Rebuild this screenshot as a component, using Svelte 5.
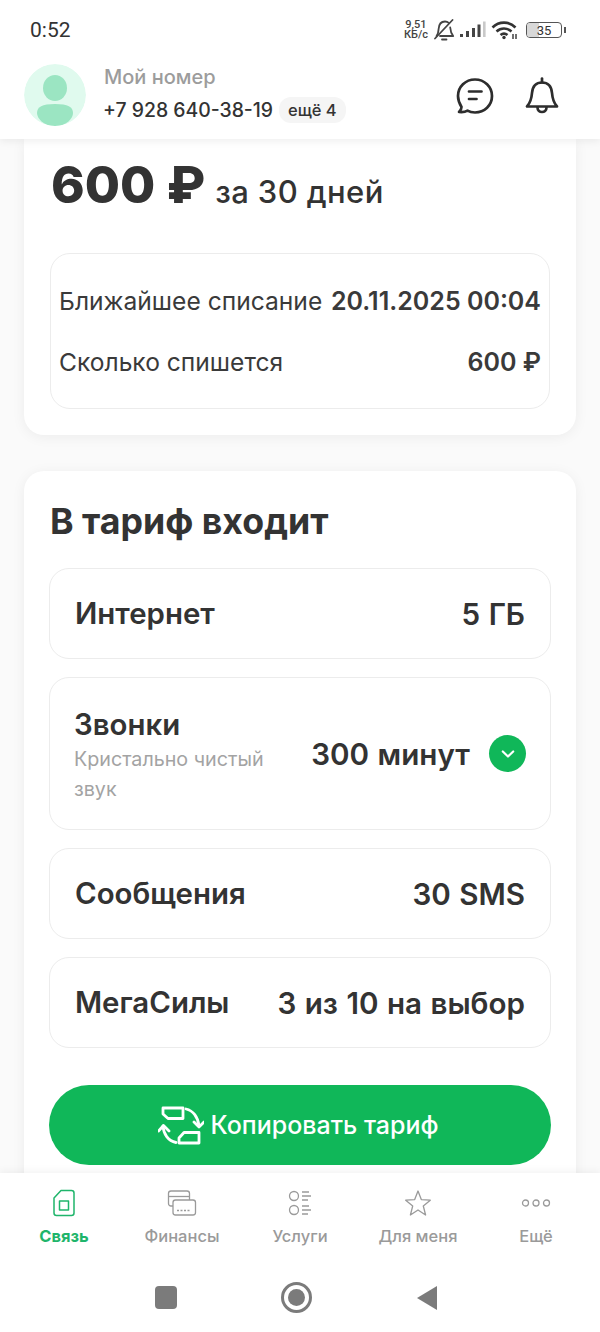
<script>
  const tabs = [
    { label: "Связь", active: true },
    { label: "Финансы" },
    { label: "Услуги" },
    { label: "Для меня" },
    { label: "Ещё" }
  ];
</script>

<div class="screen">
  <header class="top">
    <div class="status">
      <span class="time">0:52</span>
      <div class="status-icons">
        <span class="speed">9,51<br />КБ/с</span>
        <svg width="22" height="22" viewBox="0 0 22 22" fill="none" stroke="#444" stroke-width="1.8" stroke-linejoin="round" stroke-linecap="round">
          <path d="M3.500 17c1.600-1.800 1.900-4 2.100-7C5.900 5.500 8 2.500 12 2.500c1.500 0 2.800.5 3.800 1.400" />
          <path d="M17.200 8.500c.2 3 .7 5.700 3 8.500H7" />
          <path d="M9 20.500h4.500" />
          <path d="M2 19.500 19.500 1" />
        </svg>
        <svg class="signal" width="26" height="18" viewBox="0 0 26 18" fill="#444">
          <rect x="0" y="13" width="3" height="3" />
          <rect x="6" y="10" width="3" height="6" />
          <rect x="12" y="7" width="3" height="9" />
          <rect x="17.500" y="3.500" width="3" height="12.500" />
          <rect x="23" y="0.500" width="2.600" height="15.500" fill="#c9c9c9" />
        </svg>
        <svg width="28" height="20" viewBox="0 0 28 20" fill="none" stroke="#333" stroke-width="2.600">
          <path d="M1.500 7.500C8 1 18 1 24.500 7.500" />
          <path d="M5.500 11.500c4.500-4 10.500-4 15 0" />
          <path d="M9.500 15c2.200-1.800 4.800-1.800 7 0" />
          <circle cx="13" cy="17.500" r="1.700" fill="#333" stroke="none" />
          <path d="M22 19v-5M25 19v-5" stroke-width="1.400" />
        </svg>
        <div class="battery">
          <div class="battery-fill"></div>
          <span>35</span>
        </div>
        <div class="battery-tip"></div>
      </div>
    </div>
    <div class="account">
      <div class="avatar">
        <svg width="62" height="62" viewBox="0 0 62 62">
          <circle cx="31" cy="31" r="31" fill="#e0faee" />
          <ellipse cx="31" cy="24" rx="12" ry="13" fill="#9be5c2" />
          <path d="M13 49c0-6 5-9 18-9s18 3 18 9c0 5-6 13-18 13S13 54 13 49z" fill="#9be5c2" />
        </svg>
      </div>
      <div class="account-text">
        <div class="my-number">Мой номер</div>
        <div class="phone-row">
          <span class="phone">+7 928 640-38-19</span>
          <span class="more">ещё 4</span>
        </div>
      </div>
      <div class="actions">
        <svg width="40" height="40" viewBox="0 0 40 40" fill="none" stroke="#2d2d2d" stroke-width="2.700" stroke-linecap="round" stroke-linejoin="round">
          <path d="M20 3.500c9.500 0 17 7.200 17 16.500s-7.500 16.500-17 16.500c-3 0-5.500-.6-7.500-1.800-2.200 1.300-5 1.700-8.500 1.300 1.600-1.500 2.500-3.200 2.500-5C4.700 28 3 24.300 3 20 3 10.700 10.500 3.500 20 3.500z" />
          <path d="M14 15.500h12.500M14 23h7.500" />
        </svg>
        <svg width="36" height="40" viewBox="0 0 36 40" fill="none" stroke="#2d2d2d" stroke-width="2.700" stroke-linecap="round" stroke-linejoin="round">
          <path d="M18 6.500c-6.500 0-9.500 4.800-10 10.500-.4 5-1.400 9.500-5 13.500h30c-3.600-4-4.600-8.500-5-13.500-.5-5.700-3.500-10.500-10-10.500z" />
          <path d="M18 2.500v4" />
          <path d="M13.500 31.500c0 6 9 6 9 0" />
        </svg>
      </div>
    </div>
  </header>

  <main class="content">
    <section class="card price-card">
      <div class="price">
        <span class="amount">600 ₽</span>
        <span class="period">за 30 дней</span>
      </div>
      <div class="charge">
        <div class="charge-row">
          <span>Ближайшее списание</span>
          <b>20.11.2025 00:04</b>
        </div>
        <div class="charge-row">
          <span>Сколько спишется</span>
          <b>600 ₽</b>
        </div>
      </div>
    </section>

    <section class="card tariff-card">
      <h2>В тариф входит</h2>
      <div class="row">
        <span class="name">Интернет</span>
        <span class="value">5 ГБ</span>
      </div>
      <div class="row tall">
        <div class="name-col">
          <span class="name">Звонки</span>
          <span class="note">Кристально чистый звук</span>
        </div>
        <div class="value-wrap">
          <span class="value">300 минут</span>
          <span class="chevron">
            <svg width="14" height="10" viewBox="0 0 14 10" fill="none" stroke="#fff" stroke-width="2.200" stroke-linecap="round" stroke-linejoin="round">
              <path d="M1.800 2.500 7 7.500l5.200-5" />
            </svg>
          </span>
        </div>
      </div>
      <div class="row">
        <span class="name">Сообщения</span>
        <span class="value">30 SMS</span>
      </div>
      <div class="row">
        <span class="name">МегаСилы</span>
        <span class="value">3 из 10 на выбор</span>
      </div>
      <button class="copy">
        <svg width="46" height="40" viewBox="0 0 46 40" fill="none" stroke="#fff" stroke-width="2.800" stroke-linecap="round" stroke-linejoin="round">
          <path d="M5 3h20v10.500H10L5 9z" />
          <path d="M28 4c7 1.500 12 8 13 17" />
          <path d="M36 17l5 5 5-5" />
          <path d="M18 37.500C10 36 5.500 29 5 21" />
          <path d="M0.500 26 5.500 20.500 11 26" />
          <path d="M26 27.500h15v10.500H21v-5z" />
        </svg>
        <span>Копировать тариф</span>
      </button>
    </section>
  </main>

  <nav class="tabs">
    {#each tabs as tab, i}
      <div class="tab" class:active={tab.active}>
        <div class="tab-icon">
          {#if i === 0}
            <svg width="24" height="28" viewBox="0 0 24 28" fill="none" stroke="#1fb56b" stroke-width="1.500" stroke-linejoin="round">
              <path d="M9 1.500h10.500a2.500 2.500 0 0 1 2.500 2.500v20a2.500 2.500 0 0 1-2.500 2.500h-15A2.500 2.500 0 0 1 2 24V9z" />
              <rect x="7.500" y="12" width="9" height="9" />
            </svg>
          {:else if i === 1}
            <svg width="30" height="28" viewBox="0 0 30 28" fill="none" stroke="#9a9a9a" stroke-width="1.300" stroke-linejoin="round">
              <path d="M22 17H4a2.500 2.500 0 0 1-2.500-2.500v-10A2.500 2.500 0 0 1 4 2h16a2.500 2.500 0 0 1 2.500 2.500V11" />
              <path d="M1.500 7.500h21" />
              <rect x="6" y="11" width="22.500" height="15" rx="2.500" fill="#fff" />
              <path d="M10 21.500h14" stroke-dasharray="2 1.500" />
            </svg>
          {:else if i === 2}
            <svg width="24" height="28" viewBox="0 0 24 28" fill="none" stroke="#9a9a9a" stroke-width="1.300">
              <circle cx="6" cy="7" r="4.500" />
              <circle cx="6" cy="21" r="4.500" />
              <path d="M14 3h7M14 7h9M14 11h6M14 17h7M14 21h9M14 25h6" />
            </svg>
          {:else if i === 3}
            <svg width="26" height="28" viewBox="0 0 26 28" fill="none" stroke="#9a9a9a" stroke-width="1.300" stroke-linejoin="round">
              <path d="M13 2l3.300 8.600 9 .6-7 5.800 2.300 9L13 21l-7.600 5 2.300-9-7-5.800 9-.6z" />
            </svg>
          {:else}
            <svg width="30" height="10" viewBox="0 0 30 10" fill="none" stroke="#9a9a9a" stroke-width="1.300">
              <circle cx="4.500" cy="5" r="3" />
              <circle cx="15" cy="5" r="3" />
              <circle cx="25.500" cy="5" r="3" />
            </svg>
          {/if}
        </div>
        <span>{tab.label}</span>
      </div>
    {/each}
  </nav>

  <div class="system-nav">
    <div class="sys-square"></div>
    <div class="sys-circle"><div></div></div>
    <svg width="22" height="26" viewBox="0 0 22 26"><path d="M21 1v24L1 13z" fill="#7b7b7b" /></svg>
  </div>
</div>

<style>
  :global(body) {
    background: #fff;
  }
  .screen {
    width: 600px;
    height: 1332px;
    display: flex;
    flex-direction: column;
    overflow: hidden;
    font-family: Inter, "Noto Sans", sans-serif;
    color: #333;
    background: #fafafa;
  }
  .top {
    background: #fff;
    height: 139px;
    flex: none;
    box-shadow: 0 2px 8px rgba(0, 0, 0, 0.07);
    position: relative;
    z-index: 2;
  }
  .status {
    height: 60px;
    padding: 0 34px 0 30px;
    display: flex;
    align-items: center;
    justify-content: space-between;
  }
  .time {
    font-family: Roboto, sans-serif;
    font-size: 21px;
    color: #333;
  }
  .status-icons {
    display: flex;
    align-items: center;
    gap: 5px;
  }
  .speed {
    font-family: Roboto, sans-serif;
    font-size: 11px;
    line-height: 10.500px;
    font-weight: 500;
    color: #444;
    text-align: center;
  }
  .battery {
    position: relative;
    width: 36px;
    height: 16px;
    box-sizing: border-box;
    border: 1.500px solid #555;
    border-radius: 4px;
    margin-left: 2px;
    overflow: hidden;
    display: flex;
    align-items: center;
    justify-content: center;
    font-family: Roboto, sans-serif;
    font-size: 13px;
    color: #333;
  }
  .battery span {
    position: relative;
  }
  .battery-fill {
    position: absolute;
    left: 0;
    top: 0;
    bottom: 0;
    width: 35%;
    background: #d8d8d8;
  }
  .battery-tip {
    width: 2px;
    height: 6px;
    background: #555;
    margin-left: -3px;
  }
  .account {
    display: flex;
    align-items: center;
    padding: 0 40px 0 24px;
    margin-top: 4px;
  }
  .avatar {
    width: 62px;
    height: 62px;
    border-radius: 50%;
    overflow: hidden;
    flex: none;
  }
  .account-text {
    margin-left: 18px;
    margin-top: -4px;
    flex: 1;
  }
  .my-number {
    font-size: 20px;
    line-height: 26px;
    font-weight: 500;
    color: #9c9c9c;
  }
  .phone-row {
    display: flex;
    align-items: center;
    margin-top: 7px;
    gap: 6px;
    margin-left: -1px;
  }
  .phone {
    font-size: 19.400px;
    font-weight: 500;
    color: #333;
  }
  .more {
    background: #f5f5f5;
    border-radius: 12px;
    padding: 3px 9px;
    font-size: 16.500px;
    font-weight: 500;
    color: #333;
  }
  .actions {
    display: flex;
    align-items: center;
    gap: 29px;
    margin-top: 2px;
  }
  .content {
    flex: 1;
    min-height: 0;
    overflow: hidden;
    padding: 0 24px;
    display: flex;
    flex-direction: column;
    gap: 36px;
  }
  .card {
    background: #fff;
    border-radius: 20px;
    box-shadow: 0 2px 14px rgba(0, 0, 0, 0.06);
    flex: none;
  }
  .price-card {
    border-radius: 0 0 20px 20px;
    padding: 16px 26px 26px 26px;
    height: 296px;
    box-sizing: border-box;
  }
  .price {
    display: flex;
    align-items: baseline;
    gap: 10px;
    height: 60px;
    padding-left: 1px;
  }
  .amount {
    font-size: 51px;
    font-weight: 800;
    line-height: 60px;
    color: #333;
  }
  .period {
    font-size: 31px;
    font-weight: 500;
    letter-spacing: 0.4px;
  }
  .charge {
    margin-top: 38px;
    border: 1px solid #ececec;
    border-radius: 20px;
    height: 156px;
    box-sizing: border-box;
    padding: 16px 8px 15px 8px;
    display: flex;
    flex-direction: column;
    justify-content: space-around;
  }
  .charge-row {
    display: flex;
    justify-content: space-between;
    align-items: center;
    font-size: 24.600px;
    color: #3a3a3a;
  }
  .charge-row b {
    font-size: 25px;
    font-weight: 600;
  }
  .tariff-card {
    padding: 30px 25px 40px;
    display: flex;
    flex-direction: column;
    gap: 18px;
  }
  h2 {
    margin: 0 0 9px;
    padding-left: 1px;
    font-size: 35.700px;
    line-height: 40px;
    font-weight: 700;
    color: #333;
  }
  .row {
    border: 1px solid #ececec;
    border-radius: 20px;
    height: 91px;
    box-sizing: border-box;
    padding: 0 25px;
    display: flex;
    align-items: center;
    justify-content: space-between;
  }
  .row.tall {
    height: 153px;
  }
  .name {
    font-size: 29.400px;
    font-weight: 600;
    color: #333;
  }
  .value {
    font-size: 29.600px;
    font-weight: 600;
    color: #333;
    white-space: nowrap;
    word-spacing: 1px;
  }
  .name-col {
    display: flex;
    flex-direction: column;
    width: 210px;
    padding-top: 3px;
    margin-left: -1px;
  }
  .note {
    font-size: 19.700px;
    line-height: 30px;
    color: #a3a3a3;
    margin-top: 2px;
  }
  .value-wrap {
    display: flex;
    align-items: center;
    gap: 19px;
    margin-right: -1px;
  }
  .chevron {
    width: 37px;
    height: 37px;
    border-radius: 50%;
    background: #10b759;
    display: flex;
    align-items: center;
    justify-content: center;
  }
  .copy {
    margin-top: 19px;
    height: 80px;
    border: none;
    border-radius: 40px;
    background: #10b759;
    color: #fff;
    font-family: inherit;
    font-size: 25px;
    font-weight: 500;
    display: flex;
    align-items: center;
    justify-content: center;
    gap: 6px;
    flex: none;
    padding-right: 9px;
  }
  .tabs {
    flex: none;
    height: 93px;
    background: #fff;
    display: grid;
    grid-template-columns: repeat(5, 118px);
    padding-left: 5px;
    box-shadow: 0 -2px 8px rgba(0, 0, 0, 0.05);
    position: relative;
    z-index: 2;
  }
  .tab {
    display: flex;
    flex-direction: column;
    align-items: center;
    font-size: 16.500px;
    font-weight: 500;
    color: #9a9a9a;
  }
  .tab.active {
    color: #1fb56b;
    font-weight: 700;
  }
  .tab-icon {
    height: 28px;
    margin-top: 16px;
    display: flex;
    align-items: center;
    justify-content: center;
  }
  .tab span {
    margin-top: 9px;
  }
  .system-nav {
    flex: none;
    height: 66px;
    background: #fff;
    display: flex;
    align-items: flex-start;
    justify-content: center;
    gap: 104px;
    padding-right: 7px;
    position: relative;
    z-index: 2;
  }
  .sys-square {
    width: 22px;
    height: 23px;
    background: #7b7b7b;
    border-radius: 4px;
    margin-top: 20px;
  }
  .sys-circle {
    width: 31px;
    height: 31px;
    box-sizing: border-box;
    border: 3px solid #7b7b7b;
    border-radius: 50%;
    display: flex;
    align-items: center;
    justify-content: center;
    margin-top: 16px;
  }
  .sys-circle div {
    width: 17px;
    height: 17px;
    background: #7b7b7b;
    border-radius: 50%;
  }
  .system-nav svg {
    margin-top: 19px;
  }
</style>
